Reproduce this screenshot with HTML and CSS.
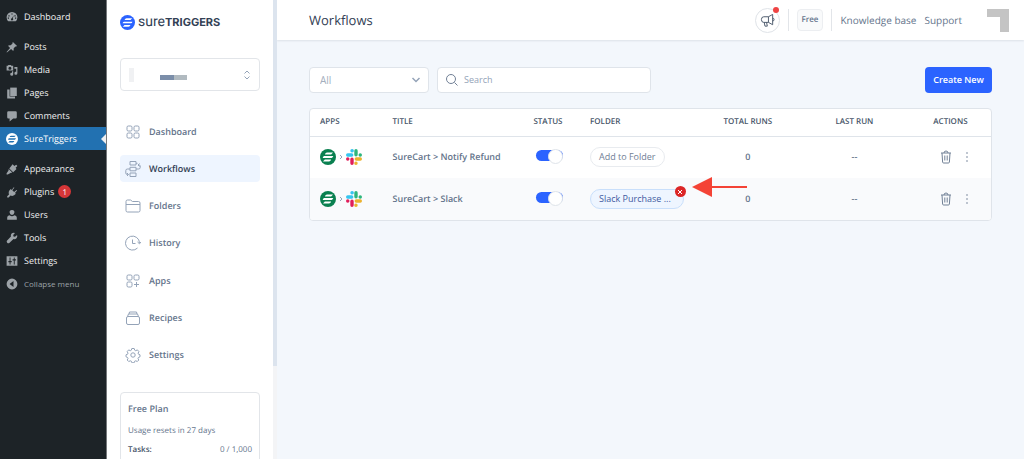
FILE: index.html
```html
<!DOCTYPE html>
<html lang="en">
<head>
<meta charset="utf-8">
<title>Workflows</title>
<link rel="stylesheet" href="styles.css">
</head>
<body>
<svg class="defs" aria-hidden="true">
  <symbol id="sure" viewBox="0 0 16 16"><circle cx="8" cy="8" r="8"/><g class="bars"><path d="M7 3.500h6L11.200 5.400H4.800Q5.500 3.500 7 3.500z"/><path d="M4.300 7.100h9q-.5 1.800-1.700 1.800H2.700q.4-1.800 1.600-1.800z"/><path d="M4.800 10.600h6.400q-.7 1.900-2.200 1.900H3z"/></g></symbol>
  <symbol id="slack" viewBox="0 0 16 16"><g stroke-width="3.400" stroke-linecap="round"><path stroke="#36c5f0" d="M1.700 6h4M6 1.700h.2"/><path stroke="#2eb67d" d="M10 1.700v4M14.300 6h-.1"/><path stroke="#ecb22e" d="M14.300 10h-4M10 14.300h-.1"/><path stroke="#e01e5a" d="M6 14.300v-4M1.700 10h.1"/></g></symbol>
  <symbol id="trash" viewBox="0 0 12 14"><path d="M1 3h10M4 3q0-2 2-2t2 2M2 3l.6 9q.1 1 1 1h4.800q.9 0 1-1L10 3M4.800 5.500v5M7.200 5.500v5"/></symbol>
  <symbol id="dots" viewBox="0 0 4 12"><circle cx="2" cy="2" r=".8"/><circle cx="2" cy="6" r=".8"/><circle cx="2" cy="10" r=".8"/></symbol>
</svg>
<div class="shell">
  <nav class="admin" aria-label="Admin menu">
    <ul class="admin-group">
      <li><a href="#"><svg viewBox="0 0 20 20"><path fill-rule="evenodd" d="M3.800 17A9 9 0 1 1 16.200 17zM9 4h2v2H9zM4 7h2v2H4zM14 7h2v2h-2zM3 11h2v2H3zM15 11h2v2h-2zM12.700 7.200l-1.300 5.400a1.800 1.800 0 1 1-1.400-.6z"/></svg>Dashboard</a></li>
    </ul>
    <ul class="admin-group">
      <li><a href="#"><svg viewBox="0 0 20 20"><path d="M11.500 1.500l7 7-1.800.8-.9-.2-3 3q.5 2.800-.8 4.600l-3.500-3.500L1.500 19l-.5-.5 5.800-7L3.300 8q1.800-1.300 4.600-.8l3-3-.2-.9z"/></svg>Posts</a></li>
      <li><a href="#"><svg viewBox="0 0 20 20"><path fill-rule="evenodd" d="M1 3h2l1-1.500h4L9 3h3v8H1zM6.500 4.500a2.500 2.500 0 1 0 0 5 2.500 2.500 0 0 0 0-5zM14 5h5v10.500a2.500 2.500 0 1 1-2-2.400V8h-3zM10 12h2v5a2.500 2.500 0 1 1-2-2.400z"/></svg>Media</a></li>
      <li><a href="#"><svg viewBox="0 0 20 20"><path d="M7 1h11v14H7z"/><path d="M2 4h4v12h9v3H2z"/></svg>Pages</a></li>
      <li><a href="#"><svg viewBox="0 0 20 20"><path d="M4 2h12q2 0 2 2v8q0 2-2 2h-4l-6 5v-5H4q-2 0-2-2V4q0-2 2-2z"/></svg>Comments</a></li>
      <li><a class="current" href="#"><svg><use href="#sure"/></svg>SureTriggers</a></li>
    </ul>
    <ul class="admin-group">
      <li><a href="#"><svg viewBox="0 0 20 20"><path d="M11 2l3 3 3-2 2 2-3 3 1.500 2-5.500 5.500L5.500 9zM4.500 10l6 6-3 .5L3 19H1v-2l3-4z"/></svg>Appearance</a></li>
      <li><a href="#"><svg viewBox="0 0 20 20"><path d="M13 2l1 1-3.500 4 3 3L17.500 6.500l1 1-3.500 4 1.500 1.500q-4 5-9 3l-3 3H2v-2l3-3q-2-5 3-9L9.500 6.500z"/></svg>Plugins <span class="count">1</span></a></li>
      <li><a href="#"><svg viewBox="0 0 20 20"><path d="M10 1.500a4 4 0 0 1 4 4.500q-.5 4-4 4T6 6a4 4 0 0 1 4-4.500zM2 18v-4q0-3 4-3.500 4 3 8 0 4 .5 4 3.500v4z"/></svg>Users</a></li>
      <li><a href="#"><svg viewBox="0 0 20 20"><path d="M18.500 5l-3.500 3-2.500-.5L12 5l3-3.500q-4-1-6 1.500-1.500 2-.8 4.500L1.500 14.500q-1 2 .5 3.500t3.500.5l7-6.700q3 .7 5-1.300T18.500 5z"/></svg>Tools</a></li>
      <li><a href="#"><svg viewBox="0 0 20 20"><path fill-rule="evenodd" d="M1 2h18v16H1zM6 4v6H4v2h2v4h1.500v-4h2v-2h-2V4zM13 4v3h-2v2h2v7h1.500V9h2V7h-2V4z"/></svg>Settings</a></li>
      <li><button class="collapse" type="button"><svg viewBox="0 0 20 20"><path fill-rule="evenodd" d="M10 1a9 9 0 1 1 0 18 9 9 0 0 1 0-18zM12.500 5v10L6 10z"/></svg>Collapse menu</button></li>
    </ul>
  </nav>

  <aside class="side">
    <a class="brand" href="#"><svg><use href="#sure"/></svg><span>sure<b>TRIGGERS</b></span></a>
    <button class="account" type="button" aria-label="Switch account">
      <span class="avatar"></span><span class="masked"></span>
      <svg viewBox="0 0 8 10"><path d="M1.500 3.500L4 1l2.500 2.500M1.500 6.500L4 9l2.500-2.500"/></svg>
    </button>
    <nav class="menu" aria-label="Main">
      <a href="#"><svg viewBox="0 0 16 16"><rect x="2" y="2" width="5" height="5" rx="1.300"/><rect x="9" y="2" width="5" height="5" rx="1.300"/><rect x="2" y="9" width="5" height="5" rx="1.300"/><rect x="9" y="9" width="5" height="5" rx="1.300"/></svg>Dashboard</a>
      <a class="active" href="#"><svg viewBox="0 0 16 16"><path d="M5 .5h6v3.500H5zM5 6.300h6v3.500H5zM5 12h6v3.500H5zM11 2.300h1.500M11 8h2.500q1.700 0 1.700-1.500V5q0-1-1-1h-1M14.500 2.500L13 4l1.500 1.500M5 8H2.500Q.8 8 .8 9.500V12q0 1.500 1.500 1.500h1M2 12l1.500 1.500L2 15"/></svg>Workflows</a>
      <a href="#"><svg viewBox="0 0 16 16"><path d="M1 12.500v-9Q1 2 2.500 2h3L7.500 3.500h6q1.500 0 1.500 1.500v7.500q0 1.500-1.500 1.500h-11Q1 14 1 12.500zM1 6.500h14"/></svg>Folders</a>
      <a href="#"><svg viewBox="0 0 16 16"><path d="M12.500 13A7 7 0 1 1 14.500 8M12.500 7l2 1.800L16 7M7.500 4.500v4h3"/></svg>History</a>
      <a href="#"><svg viewBox="0 0 16 16"><rect x="2" y="2" width="5" height="5" rx="1.300"/><rect x="9" y="2" width="5" height="5" rx="1.300"/><rect x="2" y="9" width="5" height="5" rx="1.300"/><path d="M11.500 9v5M9 11.500h5"/></svg>Apps</a>
      <a href="#"><svg viewBox="0 0 16 16"><rect x="1.500" y="6.500" width="13" height="8" rx="1.500"/><path d="M2.500 6.500L3.500 4h9l1 2.500M4 4l.5-2h7l.5 2"/></svg>Recipes</a>
      <a href="#"><svg viewBox="0 0 16 16"><circle cx="8" cy="8" r="2.200"/><path d="M6.800 1.500h2.400l.5 1.700 1 .5 1.700-.8 1.500 1.700-.8 1.600.4 1 1.500.6v2l-1.600.7-.4 1 .8 1.500-1.500 1.500-1.600-.7-1 .4-.6 1.600H6.900l-.6-1.600-1-.4-1.600.7-1.500-1.500.8-1.500-.4-1L1 9.800v-2l1.600-.6.4-1-.8-1.600 1.500-1.700 1.600.8 1-.5z"/></svg>Settings</a>
    </nav>
    <section class="plan">
      <h2>Free Plan</h2>
      <p>Usage resets in 27 days</p>
      <dl><dt>Tasks:</dt><dd>0 / 1,000</dd></dl>
    </section>
    <span class="scroll"></span>
  </aside>

  <div class="page">
    <header class="top">
      <h1>Workflows</h1>
      <button class="news" type="button" aria-label="What's new"><svg viewBox="0 0 16 16"><path d="M9 4L13.500 1.500v11L9 10H4Q1.500 10 1.500 7T4 4zM9 4v6M13.500 5.500q1.500 0 1.500 1.500t-1.500 1.500M4.500 10l.8 4h2.500L7 10"/></svg></button>
      <div class="plan-tag"><span class="tier">Free</span></div>
      <div class="links"><a href="#">Knowledge base</a><a href="#">Support</a></div>
      <span class="picture"></span>
    </header>
    <main class="content">
      <div class="tools">
        <label class="filter"><select aria-label="Filter"><option>All</option></select><svg viewBox="0 0 10 6"><path d="M1.500 1L5 4.500 8.500 1"/></svg></label>
        <label class="search"><svg viewBox="0 0 14 14"><circle cx="6" cy="6" r="4.500"/><path d="M9.500 9.500L12.500 12.500"/></svg><input type="search" placeholder="Search" aria-label="Search"></label>
        <button class="create" type="button">Create New</button>
      </div>
      <div class="frame">
        <table>
          <colgroup><col class="c-apps"><col class="c-title"><col class="c-status"><col class="c-folder"><col class="c-total"><col class="c-last"><col class="c-actions"></colgroup>
          <thead><tr><th>APPS</th><th>TITLE</th><th>STATUS</th><th>FOLDER</th><th class="mid">TOTAL RUNS</th><th class="mid">LAST RUN</th><th class="mid">ACTIONS</th></tr></thead>
          <tbody>
            <tr>
              <td><div class="apps"><svg class="cart"><use href="#sure"/></svg><svg class="next" viewBox="0 0 4 6"><path d="M1 1l2 2-2 2"/></svg><svg><use href="#slack"/></svg></div></td>
              <td>SureCart &gt; Notify Refund</td>
              <td><input class="switch" type="checkbox" checked aria-label="SureCart to Notify Refund enabled"></td>
              <td><button class="chip" type="button">Add to Folder</button></td>
              <td class="mid">0</td><td class="mid">--</td>
              <td><div class="acts"><button type="button" aria-label="Delete"><svg class="bin"><use href="#trash"/></svg></button><button type="button" aria-label="More"><svg class="more"><use href="#dots"/></svg></button></div></td>
            </tr>
            <tr>
              <td><div class="apps"><svg class="cart"><use href="#sure"/></svg><svg class="next" viewBox="0 0 4 6"><path d="M1 1l2 2-2 2"/></svg><svg><use href="#slack"/></svg></div></td>
              <td>SureCart &gt; Slack</td>
              <td><input class="switch" type="checkbox" checked aria-label="SureCart to Slack enabled"></td>
              <td><div class="tagged"><button class="chip filled" type="button">Slack Purchase ...</button><button class="remove" type="button" aria-label="Remove folder"><svg viewBox="0 0 6 6"><path d="M1 1l4 4M5 1L1 5"/></svg></button><svg class="arrow" viewBox="0 0 55 20"><path d="M0 10L20 0v20z"/><path d="M19 9h36v2H19z"/></svg></div></td>
              <td class="mid">0</td><td class="mid">--</td>
              <td><div class="acts"><button type="button" aria-label="Delete"><svg class="bin"><use href="#trash"/></svg></button><button type="button" aria-label="More"><svg class="more"><use href="#dots"/></svg></button></div></td>
            </tr>
          </tbody>
        </table>
      </div>
    </main>
  </div>
</div>
</body>
</html>
```

FILE: styles.css
```css
* { box-sizing: border-box; }
body { margin: 0; font: 9px/16px "Open Sans", "Noto Sans", sans-serif; color: #64748b; background: #f3f7fc; text-rendering: geometricPrecision; }
a { color: inherit; text-decoration: none; }
button { margin: 0; padding: 0; border: 0; background: none; font: inherit; color: inherit; }
ul, h1, h2, p, dl, dd { margin: 0; padding: 0; }
ul { list-style: none; }
.defs { position: absolute; width: 0; height: 0; }
.bars { fill: var(--bar, #fff); }
.shell { display: flex; height: 100vh; overflow: hidden; }

.admin { flex: 0 0 107px; background: #1d2327; color: #f0f0f1; border-right: 1px solid #75787b; padding-top: 5px; display: flex; flex-direction: column; gap: 7px; }
.admin a, .collapse { position: relative; display: flex; align-items: center; height: 23px; padding-left: 6px; gap: 6px; }
.admin svg { width: 12px; height: 12px; fill: #9ca2a7; }
.admin .current { background: #2271b1; color: #fff; --bar: #2271b1; }
.admin .current svg { fill: #fff; }
.current::after { content: ""; position: absolute; right: 0; top: 7px; border: 5px solid transparent; border-right-color: #f0f0f1; border-left: 0; }
.count { display: grid; place-items: center; width: 13px; height: 13px; border-radius: 50%; background: #d63638; color: #fff; font-size: 8px; margin-left: -2px; }
.admin .collapse { color: #9ca2a7; font-size: 8px; }

.side { position: relative; flex: 0 0 170px; background: #fff; padding: 14px 17px 0 13px; overflow: hidden; }
.brand { display: flex; align-items: center; gap: 3px; height: 16px; font: 14px/16px Roboto, sans-serif; color: #334155; }
.brand b { font: 700 11px/16px Inter, sans-serif; }
.brand svg { width: 15px; height: 15px; fill: #2b63ff; }
.account { display: flex; align-items: center; width: 100%; height: 33px; margin-top: 28px; padding: 0 8px; border: 1px solid #e2e5e9; border-radius: 4px; }
.avatar { width: 5px; height: 14px; background: #f0f1f3; }
.masked { width: 27px; height: 5px; margin: 6px auto 0 26px; background: linear-gradient(90deg, #7b8ea9 50%, #b1bac0 50%); }
.account svg { width: 8px; height: 10px; fill: none; stroke: #94a3b8; }
.menu { display: flex; flex-direction: column; justify-content: space-between; height: 251px; margin-top: 27px; }
.menu a { display: flex; align-items: center; gap: 8px; height: 27px; padding-left: 5px; border-radius: 4px; font-weight: 600; }
.menu .active { background: #eef5ff; color: #334155; }
.menu svg { width: 16px; height: 16px; fill: none; stroke: #94a3b8; stroke-linejoin: round; }
.plan { margin-top: 23px; padding: 8px 7px; height: 100px; border: 1px solid #e2e5e9; border-radius: 4px; font-size: 8px; }
.plan h2 { font-size: 9px; line-height: 16px; font-weight: 600; }
.plan p { margin-top: 6px; }
.plan dl { display: flex; justify-content: space-between; margin-top: 3px; }
.plan dt { color: #475569; font-weight: 600; }
.scroll { position: absolute; top: 0; right: 0; width: 4px; height: 100%; background: linear-gradient(#dce4ee 366px, #f3f4f6 366px); }

.page { flex: 1; min-width: 0; }
.top { display: flex; align-items: center; height: 40px; padding: 0 15px 0 32px; background: #fff; box-shadow: 0 1px 2px #0f172a18; }
.top h1 { margin-right: auto; font-size: 13px; line-height: 20px; font-weight: 500; color: #334155; }
.news { position: relative; display: grid; place-items: center; width: 25px; height: 25px; border: 1px solid #dfe3e8; border-radius: 50%; margin-right: 8px; }
.news svg { width: 15px; height: 15px; fill: none; stroke: #475569; stroke-linejoin: round; }
.news::after { content: ""; position: absolute; top: -2px; right: 0; width: 6px; height: 6px; border-radius: 50%; background: #ef4444; }
.plan-tag, .links { display: flex; align-items: center; height: 22px; padding: 0 8px; border-left: 1px solid #e2e5e9; }
.tier { border: 1px solid #eceef1; border-radius: 4px; background: #f9fafb; padding: 2px 4px; font-size: 8px; font-weight: 600; }
.links { gap: 8px; margin-right: 17px; font-size: 10px; }
.picture { width: 22px; height: 23px; border: solid #c4c4c4; border-width: 8px 9px 0 0; }

.content { padding: 27px 32px; }
.tools { display: flex; gap: 8px; margin-bottom: 15px; }
.filter, .search { display: flex; align-items: center; height: 26px; border: 1px solid #dfe4ea; border-radius: 4px; background: #fff; }
.filter { position: relative; width: 120px; }
.filter select { appearance: none; width: 100%; height: 100%; border: 0; padding: 0 10px; background: none; font: inherit; font-size: 10px; color: #a3aebd; }
.filter svg { position: absolute; right: 7px; width: 10px; height: 6px; fill: none; stroke: #94a3b8; stroke-width: 1.500; pointer-events: none; }
.search { width: 214px; padding: 0 7px; gap: 5px; }
.search svg { width: 14px; height: 14px; fill: none; stroke: #718096; }
.search input { flex: 1; min-width: 0; border: 0; padding: 0; background: none; font: inherit; }
.search input::placeholder { color: #94a3b8; }
.create { margin-left: auto; width: 67px; height: 26px; border-radius: 4px; background: #2b63ff; color: #fff; font-weight: 600; white-space: nowrap; }
.frame { border: 1px solid #dfe4ea; border-radius: 4px; overflow: hidden; background: #fff; }
table { width: 100%; border-collapse: collapse; table-layout: fixed; }
.c-apps { width: 10.5%; } .c-title { width: 20.7%; } .c-status { width: 8.3%; } .c-folder { width: 17%; } .c-total { width: 15.3%; } .c-last { width: 16%; } .c-actions { width: 12.2%; }
th { height: 27px; padding: 0 0 0 11px; text-align: left; font-size: 8px; line-height: 16px; font-weight: 600; color: #475569; border-bottom: 1px solid #dfe4ea; white-space: nowrap; }
td { height: 42px; padding: 0 0 0 11px; font-weight: 600; white-space: nowrap; }
tbody tr:nth-child(2) { background: #f9fafc; }
th:first-child, td:first-child { padding-left: 10px; }
.mid { text-align: center; padding: 0 0 0 2px; }
.apps { display: flex; align-items: center; gap: 3px; }
.apps svg { width: 16px; height: 16px; }
.cart { fill: #0a8050; }
.apps .next { width: 4px; height: 6px; fill: none; stroke: #94a3b8; }
.switch { appearance: none; display: block; position: relative; width: 27px; height: 11px; margin: 0 0 3px 3px; border-radius: 6px; background: #2b63ff; }
.switch::after { content: ""; position: absolute; right: 0; top: -1px; width: 13px; height: 13px; border-radius: 50%; background: #fff; border: 1px solid #dfe4ea; }
.chip { height: 20px; padding: 0 8px; border: 1px solid #e8ebef; border-radius: 10px; background: #fff; font-weight: 400; color: #718096; }
.filled { padding-right: 12px; background: #eef5ff; border-color: #c9dffb; color: #4059a0; }
.tagged { position: relative; display: inline-block; }
.remove { position: absolute; top: -3px; right: -2px; display: grid; place-items: center; width: 11px; height: 11px; border-radius: 50%; background: #dc2626; }
.remove svg { width: 6px; height: 6px; stroke: #fff; }
.arrow { position: absolute; left: calc(100% + 8px); top: -12px; width: 55px; height: 20px; fill: #f44336; }
.acts { display: flex; align-items: center; justify-content: center; gap: 13px; }
.acts button { display: flex; }
.bin { width: 12px; height: 14px; fill: none; stroke: #718096; }
.more { width: 4px; height: 12px; fill: #718096; }
```
